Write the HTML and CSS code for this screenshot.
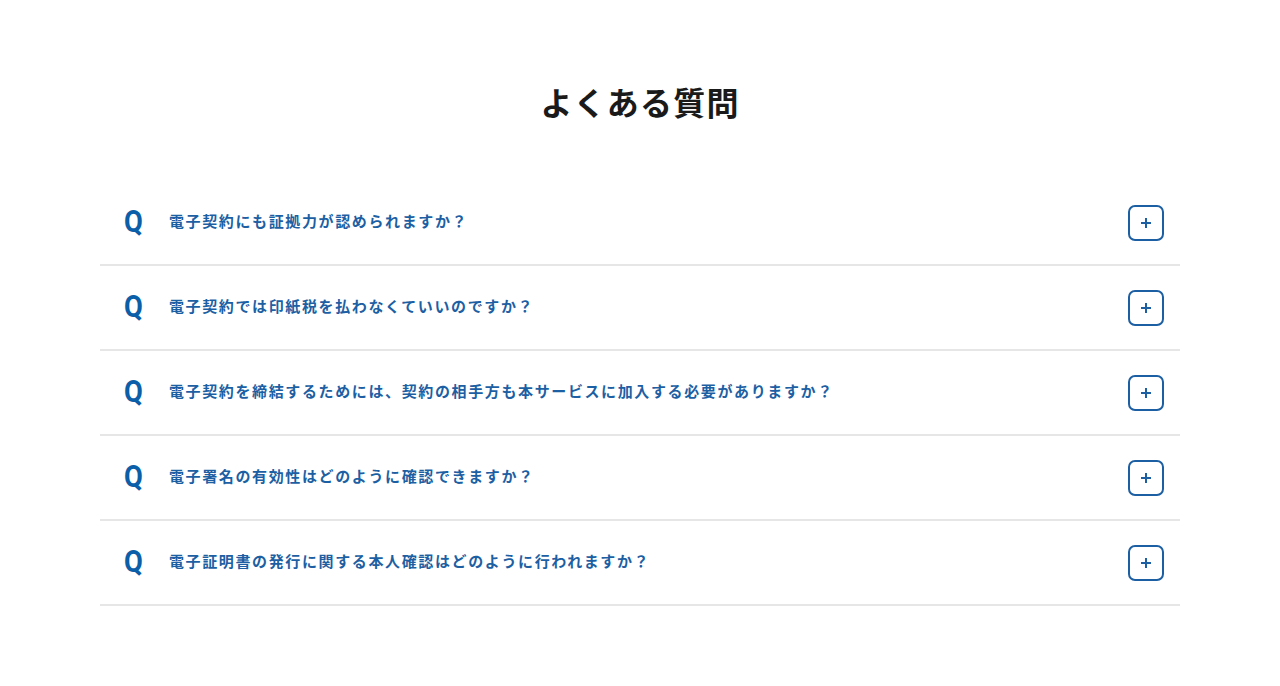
FILE: index.html
```html
<!DOCTYPE html>
<html lang="ja">
<head>
<meta charset="utf-8">
<title>よくある質問</title>
<link rel="stylesheet" href="styles.css">
</head>
<body>
<section class="faq">
  <h2 class="faq-title">よくある質問</h2>
  <ul class="faq-list">
    <li class="faq-item">
      <span class="faq-q">Q</span>
      <span class="faq-text">電子契約にも証拠力が認められますか？</span>
      <button class="faq-toggle" aria-label="開く"><svg width="12" height="12" viewBox="0 0 12 12"><path d="M6 1v10M1 6h10" stroke="currentColor" stroke-width="2" fill="none"/></svg></button>
    </li>
    <li class="faq-item">
      <span class="faq-q">Q</span>
      <span class="faq-text">電子契約では印紙税を払わなくていいのですか？</span>
      <button class="faq-toggle" aria-label="開く"><svg width="12" height="12" viewBox="0 0 12 12"><path d="M6 1v10M1 6h10" stroke="currentColor" stroke-width="2" fill="none"/></svg></button>
    </li>
    <li class="faq-item">
      <span class="faq-q">Q</span>
      <span class="faq-text">電子契約を締結するためには、契約の相手方も本サービスに加入する必要がありますか？</span>
      <button class="faq-toggle" aria-label="開く"><svg width="12" height="12" viewBox="0 0 12 12"><path d="M6 1v10M1 6h10" stroke="currentColor" stroke-width="2" fill="none"/></svg></button>
    </li>
    <li class="faq-item">
      <span class="faq-q">Q</span>
      <span class="faq-text">電子署名の有効性はどのように確認できますか？</span>
      <button class="faq-toggle" aria-label="開く"><svg width="12" height="12" viewBox="0 0 12 12"><path d="M6 1v10M1 6h10" stroke="currentColor" stroke-width="2" fill="none"/></svg></button>
    </li>
    <li class="faq-item">
      <span class="faq-q">Q</span>
      <span class="faq-text">電子証明書の発行に関する本人確認はどのように行われますか？</span>
      <button class="faq-toggle" aria-label="開く"><svg width="12" height="12" viewBox="0 0 12 12"><path d="M6 1v10M1 6h10" stroke="currentColor" stroke-width="2" fill="none"/></svg></button>
    </li>
  </ul>
</section>
</body>
</html>
```
FILE: styles.css
```css
html, body {
  margin: 0;
  padding: 0;
  background: #ffffff;
}
body {
  font-family: "Noto Sans CJK JP", "Noto Sans", sans-serif;
  color: #1a1a1a;
}
.faq {
  width: 1080px;
  margin: 0 auto;
  padding-top: 78px;
}
.faq-title {
  margin: 0;
  text-align: center;
  font-size: 32px;
  line-height: 46px;
  font-weight: 700;
  letter-spacing: 1.2px;
  color: #1a1a1a;
}
.faq-list {
  list-style: none;
  margin: 57px 0 0;
  padding: 0;
}
.faq-item {
  display: flex;
  align-items: center;
  height: 83px;
  border-bottom: 2px solid #e6e6e6;
  padding: 0 16px 0 24px;
}
.faq-q {
  font-family: Roboto, "Liberation Sans", sans-serif;
  font-weight: 700;
  font-size: 31px;
  line-height: 1;
  color: #0b5ea8;
  width: 45px;
  transform: scaleX(0.88);
  transform-origin: left center;
  margin-top: -3px;
}
.faq-text {
  flex: 1;
  font-size: 15px;
  font-weight: 700;
  letter-spacing: 1.62px;
  color: #1d5fa3;
  margin-top: -4px;
}
.faq-toggle {
  width: 36px;
  height: 36px;
  box-sizing: border-box;
  border: 2px solid #1d5fa3;
  border-radius: 7px;
  background: #fff;
  color: #1d5fa3;
  display: flex;
  align-items: center;
  justify-content: center;
  padding: 0;
  cursor: pointer;
}
.faq-toggle svg {
  display: block;
}
```
